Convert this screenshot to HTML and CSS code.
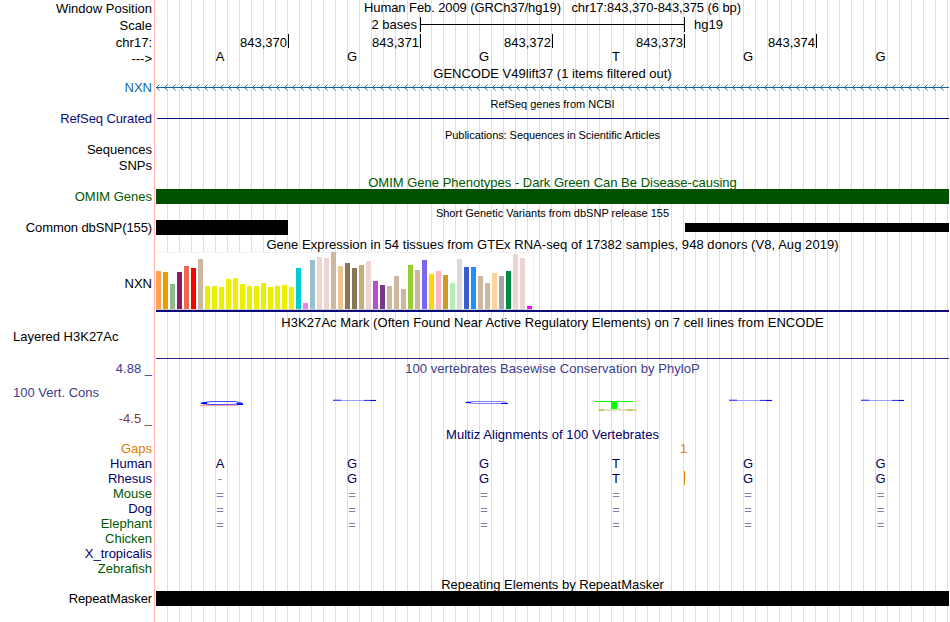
FILE: index.html
```
<!DOCTYPE html>
<html lang="en">
<head>
    <meta charset="UTF-8">
    <title>Human chr17:843,370-843,375</title>
    <link rel="stylesheet" href="styles.css">
</head>
<body>
    <div class="browser">
        <div class="row position"><div class="label">Window Position</div><div class="title">Human Feb. 2009 (GRCh37/hg19) &nbsp; chr17:843,370-843,375 (6 bp)</div></div>
        <div class="row scale"><div class="label">Scale</div><div class="track ruler"><span class="size">2 bases</span><span class="line"></span><span class="db">hg19</span></div></div>
        <div class="row coords"><div class="label">chr17:</div><div class="track ticks"><span>843,370</span><span>843,371</span><span>843,372</span><span>843,373</span><span>843,374</span></div></div>
        <div class="row bases"><div class="label">---&gt;</div><div class="track letters"><span>A</span><span>G</span><span>G</span><span>T</span><span>G</span><span>G</span></div></div>

        <div class="row gencode-title"><div class="title">GENCODE V49lift37 (1 items filtered out)</div></div>
        <div class="row gencode"><div class="label">NXN</div>
            <svg class="track" width="793" height="15">
                <defs>
                    <pattern id="arrow" width="8" height="15" patternUnits="userSpaceOnUse">
                        <path d="M3.5 4.5L0.5 7.5L3.5 10.5" fill="none" stroke="#0c68a8" stroke-width="0.9"/>
                    </pattern>
                </defs>
                <rect width="793" height="15" fill="url(#arrow)"/>
                <rect y="7" width="793" height="1" fill="#0c68a8"/>
            </svg>
        </div>

        <div class="row head"><div class="title small">RefSeq genes from NCBI</div></div>
        <div class="row refseq"><div class="label tight">RefSeq Curated</div><div class="track"><div class="gene"></div></div></div>

        <div class="row head"><div class="title small pubs-title">Publications: Sequences in Scientific Articles</div></div>
        <div class="row"><div class="label">Sequences</div></div>
        <div class="row snps"><div class="label">SNPs</div></div>

        <div class="row head green"><div class="title">OMIM Gene Phenotypes - Dark Green Can Be Disease-causing</div></div>
        <div class="row green"><div class="label">OMIM Genes</div><div class="track omim"></div></div>

        <div class="row head"><div class="title small">Short Genetic Variants from dbSNP release 155</div></div>
        <div class="row"><div class="label tight">Common dbSNP(155)</div><div class="track variants"><div class="wide"></div><div class="thin"></div></div></div>

        <div class="row head"><div class="title loose">Gene Expression in 54 tissues from GTEx RNA-seq of 17382 samples, 948 donors (V8, Aug 2019)</div></div>
        <div class="row gtex"><div class="label">NXN</div><div class="track"><div class="bars" id="bars"></div><div class="model"></div></div></div>

        <div class="row head"><div class="title loose">H3K27Ac Mark (Often Found Near Active Regulatory Elements) on 7 cell lines from ENCODE</div></div>
        <div class="row h3k"><div class="label left">Layered H3K27Ac</div><div class="track signal"></div></div>

        <div class="row phylo-title phylo"><div class="label">4.88 _</div><div class="title loose">100 vertebrates Basewise Conservation by PhyloP</div></div>
        <div class="row cons phylo">
            <div class="label"><div class="name">100 Vert. Cons</div><div class="min">-4.5 _</div></div>
            <svg class="track" width="793" height="51" fill="none">
                <!-- A -->
                <path d="M44 29.6H82" stroke="#ff7070" stroke-width="0.7"/>
                <path d="M49 26.5L55 25.5H79L86 27" stroke="#4848ff"/>
                <path d="M45 27.5L54 28.6L80 28.3" stroke="#4848ff"/>
                <path d="M44 27L48 26H51V28H46ZM80 27L87 27.3V29H81Z" fill="#0000ff"/>
                <!-- G -->
                <path d="M177 24.5H212" stroke="#9c9cf8"/>
                <path d="M177 24.2H185M208 24.4H220" stroke="#3030ff"/>
                <path d="M213 24H220V25H215Z" fill="#0000ff"/>
                <!-- G -->
                <path d="M311 26L318 25.5H344L351 26.5M312 27L320 27.5H346" stroke="#7070fa" stroke-width="0.9"/>
                <path d="M309 26H315V27H310ZM345 27H352V28H345Z" fill="#0000ff"/>
                <!-- T -->
                <path d="M439 25.5H477" stroke="#00ff00"/>
                <path d="M455 25H461V33H455Z" fill="#00ff00"/>
                <path d="M442 34H481" stroke="#c8c870"/>
                <path d="M443 34H448M471 34H477" stroke="#a8a830"/>
                <!-- G G -->
                <path d="M573 24.5H608M705 24.5H740" stroke="#9c9cf8"/>
                <path d="M573 24.2H581M604 24.4H616M705 24.2H713M736 24.4H748" stroke="#3030ff"/>
                <path d="M609 24H616V25H611ZM741 24H748V25H743Z" fill="#0000ff"/>
            </svg>
        </div>

        <div class="row multiz-title navy"><div class="title loose">Multiz Alignments of 100 Vertebrates</div></div>
        <div class="row gaps"><div class="label">Gaps</div><div class="track"><span class="gap">1</span></div></div>
        <div class="row navy"><div class="label">Human</div><div class="track letters"><span>A</span><span>G</span><span>G</span><span>T</span><span>G</span><span>G</span></div></div>
        <div class="row navy"><div class="label">Rhesus</div><div class="track letters rhesus"><span class="pale">-</span><span>G</span><span>G</span><span>T</span><span>G</span><span>G</span></div></div>
        <div class="row green"><div class="label">Mouse</div><div class="track letters aligned pale"><span>=</span><span>=</span><span>=</span><span>=</span><span>=</span><span>=</span></div></div>
        <div class="row navy"><div class="label">Dog</div><div class="track letters aligned pale"><span>=</span><span>=</span><span>=</span><span>=</span><span>=</span><span>=</span></div></div>
        <div class="row green"><div class="label">Elephant</div><div class="track letters aligned pale"><span>=</span><span>=</span><span>=</span><span>=</span><span>=</span><span>=</span></div></div>
        <div class="row green"><div class="label">Chicken</div></div>
        <div class="row navy"><div class="label">X_tropicalis</div></div>
        <div class="row green"><div class="label">Zebrafish</div></div>

        <div class="row rmsk-title"><div class="title">Repeating Elements by RepeatMasker</div></div>
        <div class="row"><div class="label tight">RepeatMasker</div><div class="track rmsk"></div></div>
    </div>

    <script>
        // one entry per GTEx tissue: height, color
        let tissues = [
            [38, "#ffa54f"], [37, "#ee9a00"], [25, "#8fbc8f"], [37, "#8b1c62"], [43, "#ee6a50"], [41, "#ff0000"],
            [50, "#cdb79e"], [23, "#eeee00"], [23, "#eeee00"], [22, "#eeee00"], [30, "#eeee00"], [31, "#eeee00"],
            [25, "#eeee00"], [23, "#eeee00"], [23, "#eeee00"], [26, "#eeee00"], [22, "#eeee00"], [23, "#eeee00"],
            [24, "#eeee00"], [22, "#eeee00"], [41, "#00cdcd"], [6, "#ee82ee"], [49, "#9ac0cd"], [52, "#eed5d2"],
            [51, "#eed5d2"], [57, "#cdb79e"], [43, "#eec591"], [46, "#8b7355"], [41, "#8b7355"], [44, "#cdaa7d"],
            [48, "#eed5d2"], [28, "#b452cd"], [24, "#7a378b"], [23, "#cdb79e"], [33, "#cdb79e"], [20, "#cdb79e"],
            [44, "#9acd32"], [39, "#cdb79e"], [49, "#7a67ee"], [35, "#ffd700"], [38, "#ffb6c1"], [34, "#cd9b1d"],
            [26, "#b4eeb4"], [50, "#d9d9d9"], [42, "#3a5fcd"], [42, "#1e90ff"], [33, "#cdb79e"], [26, "#cdb79e"],
            [36, "#ffd39b"], [33, "#a6a6a6"], [38, "#008b45"], [55, "#eed5d2"], [51, "#eed5d2"], [3, "#ff00ff"]
        ];

        let bars = document.getElementById("bars");
        for (let i = 0; i < tissues.length; i++) {
            let bar = document.createElement("div");
            bar.className = "bar";
            bar.style.height = tissues[i][0] + "px";
            bar.style.background = tissues[i][1];
            bars.appendChild(bar);
        }
    </script>
</body>
</html>
```
FILE: styles.css
```
* {
    box-sizing: border-box;
}

body {
    margin: 0;
    background: #fff;
    font: 13px/15px "Liberation Sans", Arial, sans-serif;
    color: #000;
}

/* pink divider, then a guide line every 12px */
.browser {
    width: 949px;
    height: 622px;
    overflow: hidden;
    background:
        linear-gradient(#ffb0b0, #ffb0b0) 154px 0 / 1px 100% no-repeat,
        repeating-linear-gradient(90deg, transparent 0 11px, #dcdcf8 11px 12px) 156px 0 / 793px 100% no-repeat;
}

.row {
    display: grid;
    grid-template-columns: 152px 793px;
    column-gap: 4px;
    height: 15px;
    white-space: nowrap;
}

.label {
    text-align: right;
}

.label.left {
    text-align: left;
    padding-left: 13px;
}

.title, .track {
    grid-column: 2;
}

.title {
    text-align: center;
}

.small {
    font-size: 11px;
}

.tight { letter-spacing: -0.1px; }
.loose { letter-spacing: 0.055px; }
.pubs-title { letter-spacing: -0.06px; }

.head {
    height: 16px;
    padding-top: 2px;
}

.green { color: #005800; }
.navy { color: #000064; }
.phylo { color: #3c3c8c; }

.position { height: 16px; }
.position .label { padding-top: 1px; }
.position .title { letter-spacing: -0.09px; }

.scale {
    height: 18px;
    padding-top: 1px;
}

.scale .label { padding-top: 1px; }

.ruler {
    display: flex;
}

.size {
    width: 264px;
    padding-right: 3px;
    text-align: right;
}

.line {
    width: 265px;
    height: 15px;
    border: solid #000;
    border-width: 0 1px;
    background: linear-gradient(#000, #000) 0 7px / 100% 1px no-repeat;
}

.db { padding-left: 9px; }

.coords {
    height: 16px;
    line-height: 18px;
}

.ticks {
    display: flex;
    padding-left: 1px;
}

.ticks span {
    width: 132px;
    height: 14px;
    padding-right: 1px;
    border-right: 1px solid #000;
    text-align: right;
}

.bases { height: 16px; }
.bases .label { padding-top: 1px; }
.bases .letters { line-height: 13px; }

.letters {
    display: grid;
    grid-template-columns: repeat(5, 132px) 133px;
    text-align: center;
}

.letters span { padding-right: 4px; }
.aligned { padding-top: 1px; }

.gencode-title { height: 14px; }
.gencode { color: #0c68a8; }
.refseq { color: #0c0c78; }

.gene {
    height: 1px;
    margin: 7px 0 0 1px;
    background: #0c0c78;
}

.snps {
    height: 16px;
    padding-top: 1px;
}

.omim { background: #005000; }

.variants {
    display: flex;
    align-items: center;
    justify-content: space-between;
}

.wide {
    width: 132px;
    height: 15px;
    background: #000;
}

.thin {
    width: 264px;
    height: 9px;
    background: #000;
}

.gtex {
    height: 62px;
    padding-top: 1px;
}

.gtex .label { padding-top: 24px; }

.bars {
    display: flex;
    align-items: flex-end;
    gap: 2px;
    width: 378px;
    height: 58px;
    border: 1px solid #f2f2f2;
    border-width: 1px 1px 1px 0;
    border-bottom-color: #ccc;
    background: #fff;
}

.bar { width: 5px; }

.model {
    height: 2px;
    background: #0c0c78;
}

.h3k { height: 31px; }

.signal {
    height: 30px;
    border-bottom: 1px solid #28287c;
}

.phylo-title {
    height: 16px;
    padding-top: 1px;
}

.cons { height: 51px; }
.name { text-align: left; padding: 9px 0 0 13px; }
.min { padding-top: 11px; color: #803c3c; }

.multiz-title { height: 14px; }
.gaps { color: #e08000; }
.gap { padding-left: 524px; }

/* insertion mark between bases 4 and 5 */
.rhesus { background: linear-gradient(#e08000, #e08000) 528px 0 / 1px 14px no-repeat; }

.pale { color: #8080b0; }

.rmsk-title { padding-top: 1px; }
.rmsk { background: #000; }
```
